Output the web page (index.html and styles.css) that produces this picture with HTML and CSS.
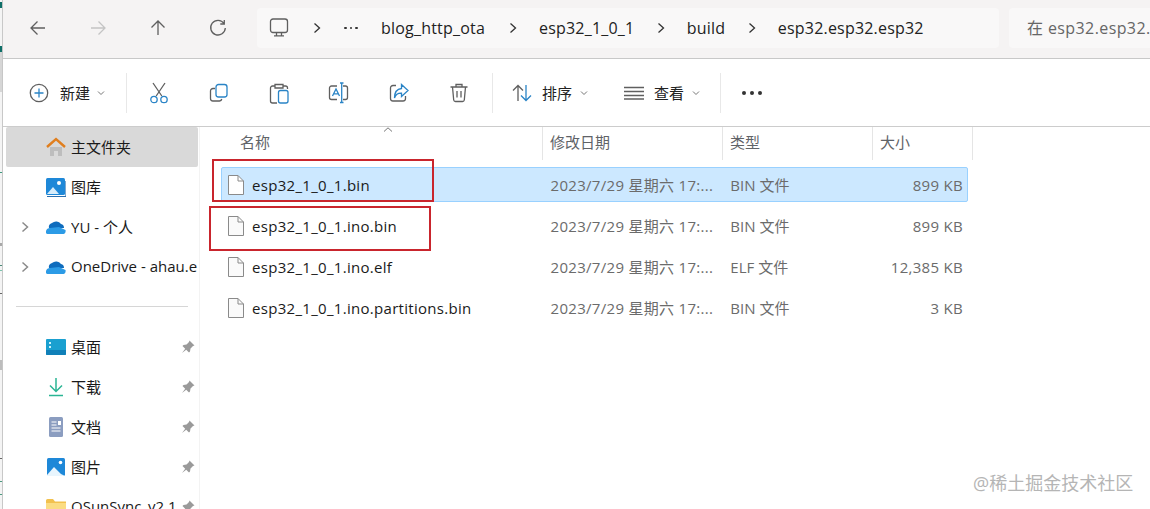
FILE: index.html
```html
<!DOCTYPE html>
<html lang="zh">
<head>
<meta charset="utf-8">
<title>esp32.esp32.esp32</title>
<link rel="stylesheet" href="styles.css">
</head>
<body>
<div class="window">
  <svg class="edge" width="3" height="509" viewBox="0 0 3 509">
    <rect width="3" height="509" fill="#f4f4f4"/>
    <rect y="52" width="2.200" height="40" fill="#d6d6d6"/>
    <rect y="2" width="2.200" height="6" fill="#0f6f68"/>
    <rect y="46" width="2.200" height="6" fill="#0f6f68"/>
    <rect y="172" width="2.200" height="1" fill="#3f9a80"/>
    <rect y="243" width="2.200" height="3" fill="#a8a8a8"/>
    <rect y="265" width="2.200" height="1" fill="#4a8a78"/>
    <rect y="270" width="2.200" height="1" fill="#7cc4ae"/>
    <rect y="293" width="2.200" height="1" fill="#666"/>
    <rect y="360" width="2.200" height="10" fill="#bdbdbd"/>
    <rect y="458" width="2.200" height="1" fill="#666"/>
    <rect y="481" width="2.200" height="1" fill="#4a9a80"/>
    <rect y="494" width="2.200" height="1" fill="#4a9a80"/>
    <rect x="2.200" width=".8" height="509" fill="#bdbdbd"/>
  </svg>
  <div class="content">
  <header class="navbar">
    <div class="nav-buttons">
      <button class="nav-btn"><svg width="20" height="20" viewBox="0 0 20 20"><path d="M17 10H3M9.500 3.500L3 10l6.500 6.500" class="ln"/></svg></button>
      <button class="nav-btn"><svg width="20" height="20" viewBox="0 0 20 20"><path d="M3 10h14M10.500 3.500L17 10l-6.500 6.500" class="ln off"/></svg></button>
      <button class="nav-btn"><svg width="20" height="20" viewBox="0 0 20 20"><path d="M10 17V3M3.500 9.500L10 3l6.500 6.500" class="ln"/></svg></button>
      <button class="nav-btn"><svg width="20" height="20" viewBox="0 0 20 20"><path d="M16 5.500A7.300 7.300 0 1 0 17.300 10M16.300 2v4h-4" class="ln"/></svg></button>
    </div>
    <div class="address">
      <svg class="pc" width="20" height="20" viewBox="0 0 20 20"><rect x="1.500" y="1" width="17" height="13.500" rx="2.500" class="ln"/><path d="M7.500 14.500v3M12.500 14.500v3M5 17.800h10" class="ln"/></svg>
      <span class="crumb-sep first"><svg width="8" height="12" viewBox="0 0 8 12"><path d="M1.500 1.500L6.500 6l-5 4.500" class="ln dark"/></svg></span>
      <span class="crumb-dots"><b></b><b></b><b></b></span>
      <span class="crumb">blog_http_ota</span>
      <span class="crumb-sep wide"><svg width="8" height="12" viewBox="0 0 8 12"><path d="M1.500 1.500L6.500 6l-5 4.500" class="ln dark"/></svg></span>
      <span class="crumb">esp32_1_0_1</span>
      <span class="crumb-sep"><svg width="8" height="12" viewBox="0 0 8 12"><path d="M1.500 1.500L6.500 6l-5 4.500" class="ln dark"/></svg></span>
      <span class="crumb">build</span>
      <span class="crumb-sep"><svg width="8" height="12" viewBox="0 0 8 12"><path d="M1.500 1.500L6.500 6l-5 4.500" class="ln dark"/></svg></span>
      <span class="crumb">esp32.esp32.esp32</span>
    </div>
    <div class="search">在 esp32.esp32.</div>
  </header>

  <div class="toolbar">
    <div class="tool tool-new">
      <svg width="20" height="20" viewBox="0 0 20 20"><circle cx="10" cy="10" r="8.700" class="ln"/><path d="M10 5.500v9M5.500 10h9" class="ln blue"/></svg>
      <span class="tool-label">新建</span>
      <svg class="caret" width="8" height="6" viewBox="0 0 8 6"><path d="M1 1.500L4 4.500l3-3" class="ln thin"/></svg>
    </div>
    <i class="tool-sep"></i>
    <div class="tool-icon first"><svg width="20" height="22" viewBox="0 0 20 22"><path d="M4 1l8.800 13M16 1L7.200 14" class="ln"/><circle cx="5" cy="17.500" r="3.200" class="ln blue"/><circle cx="15" cy="17.500" r="3.200" class="ln blue"/></svg></div>
    <div class="tool-icon"><svg width="20" height="20" viewBox="0 0 20 20"><rect x="7" y="1.500" width="11" height="12.500" rx="2.500" class="ln blue"/><path d="M6 5.500H4A2.500 2.500 0 0 0 1.500 8v7.500A2.500 2.500 0 0 0 4 18h6.500a2.500 2.500 0 0 0 2.300-2" class="ln"/></svg></div>
    <div class="tool-icon"><svg width="20" height="22" viewBox="0 0 20 22"><path d="M6 4H3.500A2 2 0 0 0 1.500 6v13a2 2 0 0 0 2 2H8M14 4h2.500A2 2 0 0 1 18.500 6v1M6 2.500h8V6H6z" class="ln"/><rect x="9.500" y="8.500" width="9.500" height="12.500" rx="2" class="ln blue"/></svg></div>
    <div class="tool-icon"><svg width="22" height="22" viewBox="0 0 22 22"><path d="M9 4H3.500a2 2 0 0 0-2 2v9.500a2 2 0 0 0 2 2H9M15 4h2.500a2 2 0 0 1 2 2v9.500a2 2 0 0 1-2 2H15" class="ln"/><path d="M4.500 14L8 7l3.500 7M5.700 11.800h4.800" class="ln blue"/><path d="M12 1h3.500M12 20.500h3.500M13.700 1v19.500" class="ln blue"/></svg></div>
    <div class="tool-icon"><svg width="20" height="20" viewBox="0 0 20 20"><path d="M7 2.500H4A2.500 2.500 0 0 0 1.500 5v10.500A2.500 2.500 0 0 0 4 18h10a2.500 2.500 0 0 0 2.500-2.500V13" class="ln"/><path d="M12.500 1.500L19 7.500l-6.500 6v-3.300C8.500 10 6.500 12 5.500 15c0-5.500 2.500-9 7-9.500z" class="ln blue"/></svg></div>
    <div class="tool-icon"><svg width="20" height="20" viewBox="0 0 20 20"><path d="M1.500 4h17M7 4V1.500h6V4M3.500 4l1.200 13a1.800 1.800 0 0 0 1.800 1.500h7a1.800 1.800 0 0 0 1.800-1.500L16.500 4M8 8v6.500M12 8v6.500" class="ln"/></svg></div>
    <i class="tool-sep s2"></i>
    <div class="tool tool-sort">
      <svg width="20" height="18" viewBox="0 0 20 18"><path d="M6 17V1.500M1 6.500l5-5 5 5" class="ln"/><path d="M14 1v15.500M9 11.500l5 5 5-5" class="ln blue"/></svg>
      <span class="tool-label">排序</span>
      <svg class="caret" width="8" height="6" viewBox="0 0 8 6"><path d="M1 1.500L4 4.500l3-3" class="ln thin"/></svg>
    </div>
    <div class="tool tool-view">
      <svg width="20" height="14" viewBox="0 0 20 14"><path d="M0 1.500h20M0 5.500h20M0 9.500h20M0 13h20" class="ln"/></svg>
      <span class="tool-label">查看</span>
      <svg class="caret" width="8" height="6" viewBox="0 0 8 6"><path d="M1 1.500L4 4.500l3-3" class="ln thin"/></svg>
    </div>
    <i class="tool-sep"></i>
    <div class="more"><b></b><b></b><b></b></div>
  </div>

  <div class="main">
    <nav class="sidebar">
      <div class="side-row active">
        <span class="expander"></span>
        <svg class="side-ico" width="20" height="20" viewBox="0 0 20 20"><path d="M4 10v9h4v-5h4v5h4v-9z" fill="#bdbdbd"/><path d="M1 10l9-8 9 8" fill="none" stroke="#e07f1f" stroke-width="2.400"/></svg>
        <span class="side-text">主文件夹</span>
      </div>
      <div class="side-row">
        <span class="expander"></span>
        <svg class="side-ico" width="20" height="20" viewBox="0 0 20 20"><rect y="1" width="19" height="17" rx="1.500" fill="#1e88d8"/><path d="M1 19.500h19V4" fill="none" stroke="#2a6fb0" stroke-width="1.200"/><circle cx="13" cy="6" r="2" fill="#fff"/><path d="M1 17l6-7 6 7z" fill="#d7ecfa"/></svg>
        <span class="side-text">图库</span>
      </div>
      <div class="side-row">
        <span class="expander"><svg width="8" height="12" viewBox="0 0 8 12"><path d="M1.500 1.500L6.500 6l-5 4.500" class="ln gray"/></svg></span>
        <svg class="side-ico" width="20" height="14" viewBox="0 0 20 14"><path d="M3 8a4 4 0 0 1 3-5 6 6 0 0 1 9 1 4 4 0 0 1 3 4z" fill="#0f6cbd"/><path d="M1.500 14A2 2 0 0 1 0 11c.5-2 2-3 4-3l9-1 6.500 3c.5 2-.5 4-2 4z" fill="#2c9be6"/></svg>
        <span class="side-text">YU - 个人</span>
      </div>
      <div class="side-row">
        <span class="expander"><svg width="8" height="12" viewBox="0 0 8 12"><path d="M1.500 1.500L6.500 6l-5 4.500" class="ln gray"/></svg></span>
        <svg class="side-ico" width="20" height="14" viewBox="0 0 20 14"><path d="M3 8a4 4 0 0 1 3-5 6 6 0 0 1 9 1 4 4 0 0 1 3 4z" fill="#0f6cbd"/><path d="M1.500 14A2 2 0 0 1 0 11c.5-2 2-3 4-3l9-1 6.500 3c.5 2-.5 4-2 4z" fill="#2c9be6"/></svg>
        <span class="side-text">OneDrive - ahau.e</span>
      </div>
      <hr class="side-divider">
      <div class="side-row">
        <span class="expander"></span>
        <svg class="side-ico" width="20" height="16" viewBox="0 0 20 16"><rect width="20" height="16" rx="1" fill="#1aa0d0"/><path d="M0 11h20v4a1 1 0 0 1-1 1H1a1 1 0 0 1-1-1z" fill="#1080b8"/><path d="M3 3h2v2H3zM3 7h2v2H3z" fill="#c9f0fb"/></svg>
        <span class="side-text">桌面</span>
        <svg class="pin" width="14" height="14" viewBox="0 0 14 14"><path d="M8.500 0.500l5 5-1.500.5-2.500 2.500-.5 3-1 1-2.800-2.800L1 13l3.200-4.200L1.500 6l1-1 3-.5L8 2z" fill="#9a9a9a"/></svg>
      </div>
      <div class="side-row">
        <span class="expander"></span>
        <svg class="side-ico" width="20" height="20" viewBox="0 0 20 20"><path d="M10 1v13M4 8.500l6 6 6-6" fill="none" stroke="#2bb594" stroke-width="1.500"/><path d="M3 18.500h14" stroke="#2bb594" stroke-width="1.500"/></svg>
        <span class="side-text">下载</span>
        <svg class="pin" width="14" height="14" viewBox="0 0 14 14"><path d="M8.500 0.500l5 5-1.500.5-2.500 2.500-.5 3-1 1-2.800-2.800L1 13l3.200-4.200L1.500 6l1-1 3-.5L8 2z" fill="#9a9a9a"/></svg>
      </div>
      <div class="side-row">
        <span class="expander"></span>
        <svg class="side-ico" width="20" height="20" viewBox="0 0 20 20"><rect x="3" width="14" height="20" rx="1.500" fill="#8b9dc0"/><path d="M5.500 5h5M5.500 8h5M5.500 11h9M5.500 14h9" stroke="#fff" stroke-width="1"/><path d="M12 4h3v4h-3z" fill="#fff"/></svg>
        <span class="side-text">文档</span>
        <svg class="pin" width="14" height="14" viewBox="0 0 14 14"><path d="M8.500 0.500l5 5-1.500.5-2.500 2.500-.5 3-1 1-2.800-2.800L1 13l3.200-4.200L1.500 6l1-1 3-.5L8 2z" fill="#9a9a9a"/></svg>
      </div>
      <div class="side-row">
        <span class="expander"></span>
        <svg class="side-ico" width="20" height="18" viewBox="0 0 20 18"><rect x="1" width="18" height="18" rx="1.500" fill="#1e88d8"/><circle cx="14.500" cy="4.500" r="1.800" fill="#fff"/><path d="M1 17l7-8 7 7 4 2H1z" fill="#e8f5fd"/></svg>
        <span class="side-text">图片</span>
        <svg class="pin" width="14" height="14" viewBox="0 0 14 14"><path d="M8.500 0.500l5 5-1.500.5-2.500 2.500-.5 3-1 1-2.800-2.800L1 13l3.200-4.200L1.500 6l1-1 3-.5L8 2z" fill="#9a9a9a"/></svg>
      </div>
      <div class="side-row">
        <span class="expander"></span>
        <svg class="side-ico" width="20" height="16" viewBox="0 0 20 16"><path d="M0 1.500A1.500 1.500 0 0 1 1.500 0H7l2 2.500h11V16H0z" fill="#f2c14e"/><path d="M0 4h20v12H0z" fill="#fbdc82"/></svg>
        <span class="side-text">QSunSync_v2.1</span>
        <svg class="pin" width="14" height="14" viewBox="0 0 14 14"><path d="M8.500 0.500l5 5-1.500.5-2.500 2.500-.5 3-1 1-2.800-2.800L1 13l3.200-4.200L1.500 6l1-1 3-.5L8 2z" fill="#9a9a9a"/></svg>
      </div>
    </nav>

    <section class="files">
      <div class="list-head">
        <div class="col c-name">名称<svg class="sort-up" width="10" height="5" viewBox="0 0 10 5"><path d="M1 4.500L5 .800l4 3.700" class="ln thin"/></svg></div>
        <div class="col c-date">修改日期</div>
        <div class="col c-type">类型</div>
        <div class="col c-size">大小</div>
      </div>
      <div class="file selected">
        <div class="c-name"><svg class="doc" width="16" height="20" viewBox="0 0 16 20"><path d="M.500.500H10L15.500 6v13.500H.500z" fill="#fff" stroke="#8a8a8a"/><path d="M10 .500V6h5.500" fill="none" stroke="#8a8a8a"/></svg>esp32_1_0_1.bin</div>
        <div class="c-date">2023/7/29 星期六 17:...</div>
        <div class="c-type">BIN 文件</div>
        <div class="c-size">899 KB</div>
      </div>
      <div class="file">
        <div class="c-name"><svg class="doc" width="16" height="20" viewBox="0 0 16 20"><path d="M.500.500H10L15.500 6v13.500H.500z" fill="#fafafa" stroke="#8a8a8a"/><path d="M10 .500V6h5.500" fill="none" stroke="#8a8a8a"/></svg>esp32_1_0_1.ino.bin</div>
        <div class="c-date">2023/7/29 星期六 17:...</div>
        <div class="c-type">BIN 文件</div>
        <div class="c-size">899 KB</div>
      </div>
      <div class="file">
        <div class="c-name"><svg class="doc" width="16" height="20" viewBox="0 0 16 20"><path d="M.500.500H10L15.500 6v13.500H.500z" fill="#fafafa" stroke="#8a8a8a"/><path d="M10 .500V6h5.500" fill="none" stroke="#8a8a8a"/></svg>esp32_1_0_1.ino.elf</div>
        <div class="c-date">2023/7/29 星期六 17:...</div>
        <div class="c-type">ELF 文件</div>
        <div class="c-size">12,385 KB</div>
      </div>
      <div class="file">
        <div class="c-name"><svg class="doc" width="16" height="20" viewBox="0 0 16 20"><path d="M.500.500H10L15.500 6v13.500H.500z" fill="#fafafa" stroke="#8a8a8a"/><path d="M10 .500V6h5.500" fill="none" stroke="#8a8a8a"/></svg>esp32_1_0_1.ino.partitions.bin</div>
        <div class="c-date">2023/7/29 星期六 17:...</div>
        <div class="c-type">BIN 文件</div>
        <div class="c-size">3 KB</div>
      </div>
      <div class="mark mark-a"></div>
      <div class="mark mark-b"></div>
    </section>
  </div>
  </div>
  <div class="watermark">@稀土掘金技术社区</div>
</div>
</body>
</html>
```
FILE: styles.css
```css
* { box-sizing: border-box; }
html, body { margin: 0; height: 100%; overflow: hidden; background: #fff; }
body { font-family: "Open Sans", "Noto Sans CJK SC", sans-serif; color: #1a1a1a; }
.window { position: relative; width: 1150px; height: 509px; overflow: hidden; display: flex; }
.edge { flex: none; display: block; }
.content { width: 1147px; flex: none; }
.ln { fill: none; stroke: #5f5f5f; stroke-width: 1.300; }
.ln.off { stroke: #c4c4c4; }
.ln.dark { stroke: #333; }
.ln.blue { stroke: #2a84c6; }
.ln.thin { stroke-width: 1; stroke: #777; }
.ln.gray { stroke: #8a8a8a; stroke-width: 1.500; }

.navbar { height: 59px; background: #f5f3f3; border-bottom: 1px solid #c8c8c8; display: flex; align-items: flex-start; padding: 8px 0 0 5px; }
.nav-buttons { display: flex; width: 249px; padding-top: 10px; }
.nav-btn { width: 60px; height: 20px; padding: 0; border: 0; background: none; display: flex; justify-content: center; }
.address { width: 742px; height: 40px; background: #f9f8f8; border-radius: 4px; display: flex; align-items: center; padding-left: 12px; font-size: 16px; letter-spacing: .2px; color: #222; white-space: nowrap; }
.pc { flex: none; }
.crumb-sep { width: 8px; margin: 0 22px 0 22.5px; display: flex; }
.crumb-sep.first { margin: 0 23px 0 24px; }
.crumb-sep.wide { margin-left: 24px; }
.crumb-dots { display: flex; gap: 3px; width: 14px; margin-right: 23px; }
.crumb-dots b { width: 2.500px; height: 2.500px; border-radius: 50%; background: #333; flex: none; }
.search { margin-left: 10px; flex: 1; height: 40px; background: #f9f8f8; border-radius: 4px 0 0 4px; padding-left: 18px; line-height: 40px; font-size: 16px; letter-spacing: .4px; color: #666; white-space: nowrap; overflow: hidden; }

.toolbar { height: 68px; background: #fff; border-bottom: 1px solid #ccc; display: flex; align-items: center; padding-left: 26px; }
.tool { display: flex; align-items: center; }
.tool svg { flex: none; }
.tool-label { font-size: 15px; margin: 0 8px 0 10px; color: #222; white-space: nowrap; }
.tool-new { width: 97px; }
.tool-new .tool-label { margin: 0 7px 0 11px; }
.tool-sep { width: 1px; height: 40px; background: #e8e8e8; flex: none; }
.tool-icon { width: 60px; display: flex; justify-content: center; }
.tool-icon.first { margin-left: 2px; }
.tool-sep.s2 { margin-left: 3px; }
.tool-sort { margin-left: 19px; width: 112px; }
.tool-view { width: 96px; }
.more { display: flex; gap: 4px; margin-left: 21px; }
.more b { width: 4px; height: 4px; border-radius: 50%; background: #333; }

.main { display: flex; height: 382px; }
.sidebar { width: 197px; flex: none; border-right: 1px solid #f3f3f3; padding: 0 0 0 3px; font-size: 15px; overflow: hidden; }
.side-row { height: 40px; width: 192px; display: flex; align-items: center; white-space: nowrap; }
.side-row.active { background: #d9d9d9; border-radius: 2px; }
.expander { width: 40px; flex: none; padding-left: 15px; display: flex; }
.side-ico { flex: none; margin-right: 5px; }
.side-text { color: #1a1a1a; overflow: hidden; flex: 1; min-width: 0; padding-bottom: 2px; }
.pin { flex: none; margin-right: 3px; }
.side-divider { width: 172px; height: 1px; margin: 19px 0 20px 10px; border: 0; background: #d6d6d6; }

.files { position: relative; flex: 1; font-size: 15px; }
.list-head { display: flex; height: 33px; width: 773px; color: #5f6368; }
.col { height: 33px; line-height: 31px; border-right: 1px solid #e5e5e5; position: relative; }
.col.c-name { width: 343px; padding-left: 40px; }
.col.c-date { width: 180px; padding-left: 7px; }
.col.c-type { width: 150px; padding-left: 7px; }
.col.c-size { width: 100px; padding-left: 7px; }
.sort-up { position: absolute; left: 183px; top: 0; }
.file { display: flex; align-items: center; height: 35px; width: 747px; margin: 7px 0 6px 21px; color: #6b6b6b; white-space: nowrap; border: 1px solid transparent; }
.file + .file { margin-top: 0; }
.file.selected { background: #cce8ff; border-color: #99d1ff; border-radius: 2px; }
.file .c-name { width: 321px; padding-left: 6px; color: #1a1a1a; display: flex; align-items: center; letter-spacing: .3px; }
.file .c-date { width: 180px; padding-left: 8px; letter-spacing: .3px; }
.file .c-type { width: 150px; padding-left: 8px; }
.file .c-size { width: 95px; padding-right: 4px; text-align: right; letter-spacing: .3px; }
.doc { margin-right: 8px; flex: none; }
.mark { position: absolute; border: 2px solid #c9252d; }
.mark-a { left: 12px; top: 32px; width: 222px; height: 43px; }
.mark-b { left: 9px; top: 79px; width: 222px; height: 45px; }
.watermark { position: absolute; left: 973px; top: 471px; font-size: 18px; line-height: 24px; color: #b5b5b5; white-space: nowrap; }
```
